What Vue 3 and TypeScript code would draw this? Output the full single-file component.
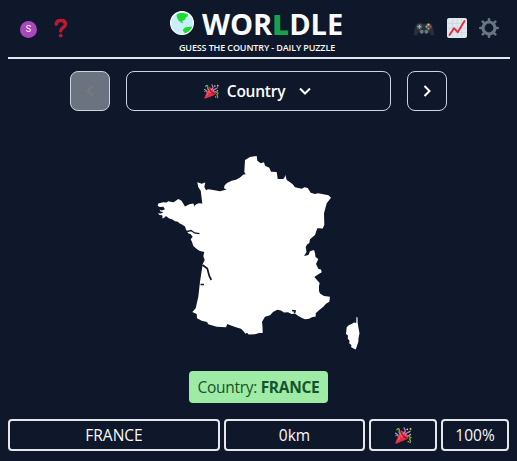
<script setup lang="ts">
import { ref } from 'vue'

interface Guess {
  name: string
  distance: string
  accuracy: string
}

const answer = ref('FRANCE')
const guesses = ref<Guess[]>([{ name: 'FRANCE', distance: '0km', accuracy: '100%' }])
</script>

<template>
  <svg class="defs" aria-hidden="true">
    <symbol id="popper" viewBox="0 0 36 36">
      <path fill="#DD2E44" d="M11.6 7.6C11 8.3 1 32.800.6 33.800c-.3.900.6 1.800 1.600 1.600C4 35 26.800 25.600 28.200 24.400c1.600-2-1.500-7.300-6-11.500S13 6.200 11.600 7.600z" />
      <path fill="#EA596E" d="M12 12 4 31l6-5 1-7 4 4 3-3z" />
      <path fill="#A0041E" d="M12 8c2 7 7 13 16 16-2 2-7 0-11-4S10.500 10 12 8z" />
      <g fill="none" stroke-width="2.800" stroke-linecap="round">
        <path stroke="#AA8DD8" d="M18 14c4-3 5-7 1-12M1 13c3 2 6 3 5 6" />
        <path stroke="#77B255" d="M4 6c2-4 6-3 5 1s0 6 2 7M26 19c6-3 3 4 8 3M32 24c-4 4 4 4 0 9" />
        <path stroke="#AA8DD8" d="M22 17c1-7 7-4 10-8" />
      </g>
      <g fill="#FFCC4D">
        <circle cx="26" cy="5" r="2" /><circle cx="33" cy="4" r="2" />
        <circle cx="32" cy="16" r="1.800" /><circle cx="28" cy="31" r="1.500" />
      </g>
      <circle cx="2" cy="18" r="1.800" fill="#5C913B" />
    </symbol>
  </svg>

  <main class="page">
    <header class="header">
      <div class="side left">
        <span class="avatar">S</span>
        <svg class="question" viewBox="0 0 14 20">
          <path d="M2.300 6.300C2.300 3.600 4.200 2.400 6.900 2.400c2.800 0 4.500 1.400 4.500 3.700 0 3.700-4.700 3-4.700 7" fill="none" stroke="#be1931" stroke-width="3.500" stroke-linecap="round" />
          <circle cx="6.700" cy="17.600" r="1.900" fill="#be1931" />
        </svg>
      </div>
      <div class="brand">
        <h1>
          <svg class="globe" viewBox="0 0 24 24">
            <circle cx="12" cy="12" r="11.400" fill="#c9effd" stroke="#fff" stroke-width="1.200" />
            <path fill="#1edc2b" d="M7 3.200C10 1.500 15 1.500 18 3.500l-.4 2.300-1.600.4-1.200 2.500-2.800 1.600 1 2.300-2.200-1-2.700-2.700L6.500 5zM22.200 15.500l-6.700.7-2.700 2.600.6 1.800 1.500 1.700c3.600-.8 6.400-3.500 7.300-6.800z" />
          </svg>
          <span class="word">WOR<b>L</b>DLE</span>
        </h1>
        <p>GUESS THE COUNTRY - DAILY PUZZLE</p>
      </div>
      <div class="side right">
        <svg class="pad" viewBox="0 0 20 20">
          <path fill="#292f33" d="M3.500 4.500 8 4l1 1h2l1-1 4.500.5C19 6.500 20 12 20 15c-.2 2-2.500 2-3.500.3L15 13H5l-1.500 2.300C2.500 17 .2 17 0 15 0 12 1 6.500 3.500 4.500z" />
          <circle cx="5.500" cy="7.700" r="2.900" fill="#414c54" /><circle cx="14.500" cy="7.700" r="2.900" fill="#414c54" />
          <path d="M5.500 5.700v4M3.500 7.700h4" stroke="#99aab5" stroke-width="1.300" />
          <circle cx="7.700" cy="12.700" r="2" fill="#66757f" /><circle cx="12.400" cy="12.700" r="2" fill="#66757f" />
          <circle cx="14.500" cy="5.700" r="1.100" fill="#ffcc4d" /><circle cx="14.500" cy="9.800" r="1" fill="#77b255" />
          <circle cx="12.600" cy="7.700" r="1.100" fill="#55acee" /><circle cx="16.600" cy="7.700" r="1.100" fill="#dd2e44" />
        </svg>
        <svg viewBox="0 0 20 20">
          <rect width="20" height="20" rx="2" fill="#e1e8ed" />
          <path d="M.8 5.500h18.400M.8 10h18.400M.8 14.500h18.400M5.500.8v18.400M10 .8v18.400M14.500.8v18.400" stroke="#ccd6dd" stroke-width=".8" />
          <path d="M2.500 17 7 10.200l3.700 4L17.500 3" fill="none" stroke="#dd2e44" stroke-width="1.900" stroke-linecap="round" stroke-linejoin="round" />
        </svg>
        <svg viewBox="0 0 20 20">
          <circle cx="10" cy="10" r="6" fill="none" stroke="#66757f" stroke-width="3.200" />
          <path d="M10 1.200v2.500M10 16.300v2.500M1.200 10h2.500M16.300 10h2.500M3.700 3.700l1.700 1.700M14.600 14.600l1.700 1.700M16.300 3.700l-1.700 1.700M5.400 14.600l-1.700 1.700" stroke="#66757f" stroke-width="2.600" stroke-linecap="round" />
        </svg>
      </div>
    </header>

    <nav class="rounds">
      <button class="step" disabled>
        <svg viewBox="0 0 16 16"><path d="M10.500 3 5.500 8l5 5" stroke="#7a7a7c" /></svg>
      </button>
      <button class="select">
        <svg class="emoji"><use href="#popper" /></svg>
        <span>Country</span>
        <svg class="chevron" viewBox="0 0 16 16"><path d="M3 5.500 8 10.500l5-5" stroke="#fff" /></svg>
      </button>
      <button class="step">
        <svg viewBox="0 0 16 16"><path d="m5.500 3 5 5-5 5" stroke="#fff" /></svg>
      </button>
    </nav>

    <svg class="map" viewBox="150 150 220 205">
      <path
        fill="#fff"
        d="M256.700 156 250 157 245 160 244.300 172 245.700 174.300 243.500 174.500 240 177.500 236 179.700 231.700 180.700 227 183 224.500 185.500 224 188.300 226.700 189.500 220 191.300 211.700 189.700 208 189.300 206 190.300 204.300 187 205.300 182.500 201.700 183.700 197.300 182.300 198.300 187.300 200.700 190.700 201.500 197 202.300 203.500 199 203.300 196.700 204 194.700 205.500 194.300 207 193.500 203.500 189.300 204.300 187 205.500 185 206.500 182.700 202.700 181.500 200.700 178.300 199 175.500 201 173.500 202.300 171.500 202 168.300 201.300 166.500 202.500 163.300 202.300 158.300 203.500 157.700 206 160 207 163.300 206.700 165 209.300 162 210.500 159.700 209.800 160.500 211.500 163.500 212.300 161 213.500 158 213.300 159.500 215 162.300 215.300 162.500 218.500 164.500 217.500 166 216 168.500 218 170 218.700 172.500 219.500 175 221.300 178 221.700 179.300 223.300 182 224.500 185 226.500 186 229.500 187.300 231.500 188 233.300 190.500 234 192.700 236.700 190.700 239.300 192 242 193.300 246 197.700 249.700 200 251 204.300 252 203.300 256 204.700 260 202.700 264 200 281.700 198.300 296.700 195.700 308.300 192.300 312 196.700 314 197 318.300 201.700 320.700 207 322 208.300 324.300 216.700 326.700 226 327.300 227.300 324 231 325.500 236.700 327.500 241 328.700 243.300 331 245.500 333.700 247 332.700 248.700 334.500 255 334.300 259 333 262.700 333 262.500 327 262 321.700 265 316.700 270 315.300 273 312 277.300 309.700 281 310.500 284 312.500 288 312.300 291.700 314 295 313.500 298.300 316 302 318 305 319.300 309 318.700 312 317.300 315.700 316.500 315.700 313.300 319 310.300 323.300 306.700 326 303.700 329.300 301.700 330 296.700 324 296 320 293.500 319 291 319 286 319.700 283 314.300 277 318 274.500 321.700 272.300 321 269.500 318.500 269 316 264 318.300 259 315.500 257 315 253 314 250 310 251.300 308.500 255 304 256 306.500 252 305.700 247 307 244.500 309.300 243 310 239.300 315 235 317.300 228.300 322.700 228.500 324.300 225 324 213.300 326.700 203.300 331 197.700 328.500 195.300 323.300 194.300 318 193.300 315 193.900 310.700 192.700 307.700 188 304.500 187.300 301.700 188.700 295 187.300 292.700 184.300 290 182.300 286.700 180 285.300 175 284.500 177.500 283.300 178.900 277.700 179 276.700 172 271 171.700 269.300 167.700 265 165.700 264 162.300 260.700 163.300 257.300 160.700Z"
      />
      <path fill="#fff" d="M356.500 317 357.500 317.200 357.700 323.300 359.500 333.500 358.500 338 358.300 342 355.700 349.500 353.500 348.500 351 347 351.500 345.300 349 343 349.700 341 347.700 338.500 348 335.500 346 334 346.700 327.300 349 325 351.700 324 354 322.500 356.200 323Z" />
      <path fill="none" stroke="#0f172a" stroke-width="1.300" d="M187 231.500 191 230.500 194.500 233 199.500 233.700" />
      <path fill="none" stroke="#0f172a" stroke-width="1.700" d="M202.500 265 207.300 268.500 208.500 273 209.300 276 211.300 280M200.500 284.500H204M292 310.500 295 311 294.500 313" />
    </svg>

    <div class="answer">Country: <strong>{{ answer }}</strong></div>

    <div v-for="guess in guesses" :key="guess.name" class="guess">
      <div>{{ guess.name }}</div>
      <div>{{ guess.distance }}</div>
      <div><svg class="emoji"><use href="#popper" /></svg></div>
      <div>{{ guess.accuracy }}</div>
    </div>
  </main>
</template>

<style>
body {
  background: #0f172a;
}
</style>

<style scoped>
.page {
  box-sizing: border-box;
  height: 461px;
  padding: 0 8px;
  background: #0f172a;
  color: #f8fafc;
  font: 15.5px/24px "Open Sans", "Noto Sans", sans-serif;
  display: flex;
  flex-direction: column;
  align-items: center;
  overflow: hidden;
}
.defs {
  display: none;
}
.page svg {
  display: block;
  flex: none;
}
.header {
  box-sizing: border-box;
  width: 502px;
  height: 59px;
  align-self: flex-start;
  flex: none;
  border-bottom: 2px solid #e2e8f0;
  display: grid;
  grid-template-columns: 162px 174px 1fr;
}
.side {
  display: flex;
  padding-top: 18px;
}
.side.left {
  padding-left: 12px;
  gap: 17px;
}
.side.right {
  justify-content: flex-end;
  gap: 12px;
  padding-right: 11px;
}
.side.right svg {
  width: 20px;
  height: 20px;
}
.side.right .pad {
  margin: 1px 1px 0 0;
}
.avatar {
  width: 17px;
  height: 17px;
  margin-top: 3px;
  border-radius: 50%;
  background: #ab47bc;
  font: 9px/17px Roboto, sans-serif;
  text-align: center;
}
.question {
  width: 14px;
  height: 20px;
}
h1 {
  margin: 0;
  height: 41px;
  display: flex;
  gap: 8px;
  font-size: 29px;
  line-height: 48px;
  font-weight: 700;
}
.globe {
  width: 24px;
  height: 24px;
  margin-top: 11px;
}
.word {
  white-space: nowrap;
}
.word b {
  color: #16a34a;
}
.brand p {
  margin: 0;
  font-size: 9px;
  line-height: 13px;
  font-weight: 600;
  letter-spacing: -0.13px;
  text-align: center;
  white-space: nowrap;
}
.rounds {
  display: flex;
  gap: 16px;
  margin-top: 12px;
}
.rounds button {
  box-sizing: border-box;
  height: 40px;
  padding: 0;
  border: 1px solid #cbd5e1;
  border-radius: 8px;
  background: transparent;
  color: #fff;
  font: 600 15.5px/24px "Open Sans", "Noto Sans", sans-serif;
  letter-spacing: -0.25px;
  display: flex;
  align-items: center;
  justify-content: center;
}
.rounds .step {
  width: 40px;
}
.rounds .step:disabled {
  background: #6b7280;
}
.rounds .select {
  width: 265px;
  gap: 8px;
}
.rounds path {
  fill: none;
  stroke-width: 2;
}
.rounds .step svg,
.chevron {
  width: 16px;
  height: 16px;
}
.chevron {
  margin-left: 4px;
}
.rounds .emoji {
  width: 15px;
  height: 15px;
}
.map {
  width: 220px;
  height: 205px;
  margin: 39px 0 16px 3px;
}
.answer {
  box-sizing: border-box;
  width: 139px;
  height: 32px;
  border-radius: 4px;
  background: #9eeba5;
  color: #14532d;
  line-height: 32px;
  letter-spacing: -0.3px;
  text-align: center;
  white-space: nowrap;
}
.answer strong {
  font-weight: 700;
}
.guess {
  display: grid;
  grid-template-columns: 212fr 141fr 68fr 68fr;
  gap: 4px;
  width: 501px;
  margin-top: 16px;
}
.guess > div {
  box-sizing: border-box;
  height: 32px;
  border: 2px solid #e5e7eb;
  border-radius: 4px;
  display: flex;
  align-items: center;
  justify-content: center;
}
.guess .emoji {
  width: 17px;
  height: 17px;
}
</style>
